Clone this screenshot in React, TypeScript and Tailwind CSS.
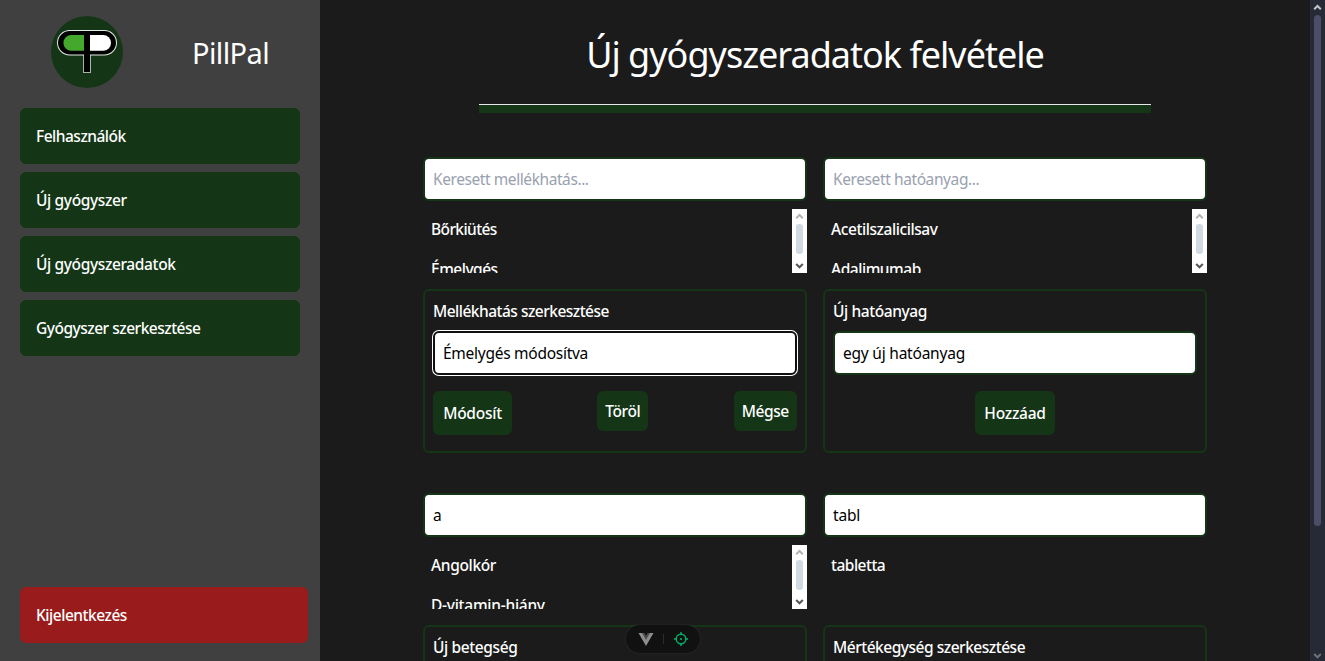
import React from "react";

type Item = { text: string; tracking: string };
type Action = { label: string; className: string };

const navItems: Item[] = [
  { text: "Felhasználók", tracking: "tracking-[-0.5px]" },
  { text: "Új gyógyszer", tracking: "tracking-[-0.36px]" },
  { text: "Új gyógyszeradatok", tracking: "tracking-[-0.37px]" },
  { text: "Gyógyszer szerkesztése", tracking: "tracking-[-0.49px]" },
];

function Logo() {
  return (
    <svg width="72" height="72" viewBox="0 0 72 72" className="block">
      <circle cx="36" cy="36" r="36" fill="#143617" />
      <rect x="32" y="30" width="8" height="27" fill="#aab3aa" />
      <rect x="6" y="14" width="60" height="25.5" rx="12.7" fill="#e4e8e4" />
      <rect x="7" y="15" width="58" height="23.5" rx="11.7" fill="#000" />
      <path d="M33 19H20.3a7.9 7.9 0 0 0 0 15.8H33Z" fill="#43a82c" />
      <path d="M39 19H52.1a7.9 7.9 0 0 1 0 15.8H39Z" fill="#fff" />
      <rect x="33" y="16" width="6" height="40" fill="#000" />
    </svg>
  );
}

function ListScrollbar() {
  return (
    <svg width="15" height="64" viewBox="0 0 15 64" className="block shrink-0">
      <rect width="15" height="64" fill="#fff" />
      <path d="M4.2 9.3 7.5 6l3.3 3.3" fill="none" stroke="#b4b4b4" strokeWidth="2" />
      <rect x="4" y="15" width="7" height="30" rx="3" fill="#d1dae3" />
      <path d="M4.2 55 7.5 58.3l3.3-3.3" fill="none" stroke="#555" strokeWidth="2" />
    </svg>
  );
}

function PageScrollbar() {
  return (
    <svg width="15" height="661" viewBox="0 0 15 661" className="block shrink-0">
      <rect width="15" height="661" fill="#262a36" />
      <path d="M4.2 9.3 7.5 6l3.3 3.3" fill="none" stroke="#c4c4c4" strokeWidth="2" />
      <rect x="4" y="15" width="7" height="511" rx="3.5" fill="#4c4d66" />
      <path d="M4.2 654 7.5 657.3l3.3-3.3" fill="none" stroke="#6f7072" strokeWidth="2" />
    </svg>
  );
}

const inputBase =
  "block h-11 w-full rounded-md border-2 bg-white px-2 text-[15.5px] text-black outline-none placeholder:text-gray-400";

function Search({ value, placeholder, items, scroll, tracking }: { value?: string; placeholder?: string; items: Item[]; scroll?: boolean; tracking: string }) {
  return (
    <>
      <input className={`${inputBase} border-[#143617] ${tracking}`} defaultValue={value} placeholder={placeholder} />
      <div className="mt-2 flex h-16 overflow-hidden">
        <ul className="flex-1">
          {items.map((item) => (
            <li key={item.text} className={`h-10 px-2 text-[15.5px] leading-10 font-medium ${item.tracking}`}>
              {item.text}
            </li>
          ))}
        </ul>
        {scroll && <ListScrollbar />}
      </div>
    </>
  );
}

function Editor({ title, tracking, value, valueTracking, focused, actions }: { title: string; tracking: string; value: string; valueTracking: string; focused?: boolean; actions: Action[] }) {
  return (
    <div className="mt-4 h-[164px] rounded-md border-2 border-[#143617] p-2">
      <div className={`h-6 text-[15.5px] leading-6 font-medium ${tracking}`}>{title}</div>
      <input
        className={`${inputBase} mt-2 ${valueTracking} ${focused ? "border-[#101010] ring-1 ring-white" : "border-[#143617]"}`}
        defaultValue={value}
      />
      <div className={`mt-4 flex items-start ${actions.length > 1 ? "justify-between" : "justify-center"}`}>
        {actions.map((a) => (
          <button key={a.label} className={`rounded-md bg-[#143617] pt-0.5 text-center text-[15.5px] font-medium whitespace-nowrap ${a.className}`}>
            {a.label}
          </button>
        ))}
      </div>
    </div>
  );
}

function DevToolsPill() {
  return (
    <div className="absolute top-[625px] left-[626px] flex h-7 w-[74px] items-center rounded-full bg-[#111] shadow-[0_0_3px_rgba(60,60,60,0.6)]">
      <svg width="74" height="28" viewBox="0 0 74 28">
        <path d="M12.5 8h5.2l2.3 4 2.3-4h5.2L20 21Z" fill="#8e8e8e" />
        <path d="M16 8h2.3l1.7 3 1.7-3H24l-4 7Z" fill="#4d4d4d" />
        <path d="M37.5 9v10" stroke="#2c2c2c" />
        <g fill="none" stroke="#00b36b" strokeWidth="1.4">
          <circle cx="55" cy="14" r="4.8" />
          <path d="M55 7v3M55 18v3M48 14h3M59 14h3" />
        </g>
        <circle cx="55" cy="14" r="1.1" fill="#00b36b" />
      </svg>
    </div>
  );
}

export default function App() {
  return (
    <div className="relative flex h-[661px] w-full overflow-hidden bg-[#1b1b1b] font-['Noto_Sans','Open_Sans',sans-serif] text-white">
      <aside className="flex w-80 shrink-0 flex-col bg-[#404040] pt-4 pb-[18px] pl-5">
        <div className="mb-5 flex h-[72px] items-center pl-[31px]">
          <Logo />
          <span className="ml-[69px] pt-0.5 text-[29px] leading-9 tracking-[-0.6px]">PillPal</span>
        </div>
        <nav className="flex w-[280px] flex-col gap-2">
          {navItems.map((item) => (
            <a key={item.text} className={`h-14 rounded-md bg-[#143617] px-4 text-[15.5px] leading-14 font-medium ${item.tracking}`}>
              {item.text}
            </a>
          ))}
        </nav>
        <button className="mt-auto h-14 w-72 rounded-md bg-[#991b1b] px-4 pt-0.5 text-left text-[15.5px] font-medium tracking-[-0.47px]">
          Kijelentkezés
        </button>
      </aside>
      <main className="flex flex-1 flex-col items-center">
        <h1 className="mt-[35px] h-10 shrink-0 text-[36px] leading-10 tracking-[-1px] whitespace-nowrap">Új gyógyszeradatok felvétele</h1>
        <div className="mt-[29px] h-[9px] w-[672px] shrink-0 border-t border-gray-200 bg-[#143617]" />
        <div className="mt-11 grid w-[784px] shrink-0 grid-cols-2 gap-x-4 gap-y-10">
          <section>
            <Search
              placeholder="Keresett mellékhatás..."
              tracking="tracking-[-0.42px]"
              scroll
              items={[
                { text: "Bőrkiütés", tracking: "tracking-[-0.6px]" },
                { text: "Émelygés", tracking: "tracking-[-0.5px]" },
              ]}
            />
            <Editor
              title="Mellékhatás szerkesztése"
              tracking="tracking-[-0.51px]"
              value="Émelygés módosítva"
              valueTracking="tracking-[-0.27px]"
              focused
              actions={[
                { label: "Módosít", className: "h-11 w-[79px] tracking-[-0.25px]" },
                { label: "Töröl", className: "h-10 w-[51px] tracking-[-0.4px]" },
                { label: "Mégse", className: "h-10 w-[63.5px] tracking-[-0.4px]" },
              ]}
            />
          </section>
          <section>
            <Search
              placeholder="Keresett hatóanyag..."
              tracking="tracking-[-0.4px]"
              scroll
              items={[
                { text: "Acetilszalicilsav", tracking: "tracking-[-0.42px]" },
                { text: "Adalimumab", tracking: "tracking-[-0.47px]" },
              ]}
            />
            <Editor
              title="Új hatóanyag"
              tracking="tracking-[-0.42px]"
              value="egy új hatóanyag"
              valueTracking="tracking-[-0.22px]"
              actions={[{ label: "Hozzáad", className: "h-11 w-20 tracking-[-0.25px]" }]}
            />
          </section>
          <section>
            <Search
              value="a"
              tracking="tracking-[-0.2px]"
              scroll
              items={[
                { text: "Angolkór", tracking: "tracking-[-0.35px]" },
                { text: "D-vitamin-hiány", tracking: "tracking-[-0.26px]" },
              ]}
            />
            <Editor title="Új betegség" tracking="tracking-[-0.38px]" value="" valueTracking="" actions={[]} />
          </section>
          <section>
            <Search value="tabl" tracking="tracking-[-0.2px]" items={[{ text: "tabletta", tracking: "tracking-[-0.5px]" }]} />
            <Editor title="Mértékegység szerkesztése" tracking="tracking-[-0.48px]" value="" valueTracking="" actions={[]} />
          </section>
        </div>
      </main>
      <PageScrollbar />
      <DevToolsPill />
    </div>
  );
}
